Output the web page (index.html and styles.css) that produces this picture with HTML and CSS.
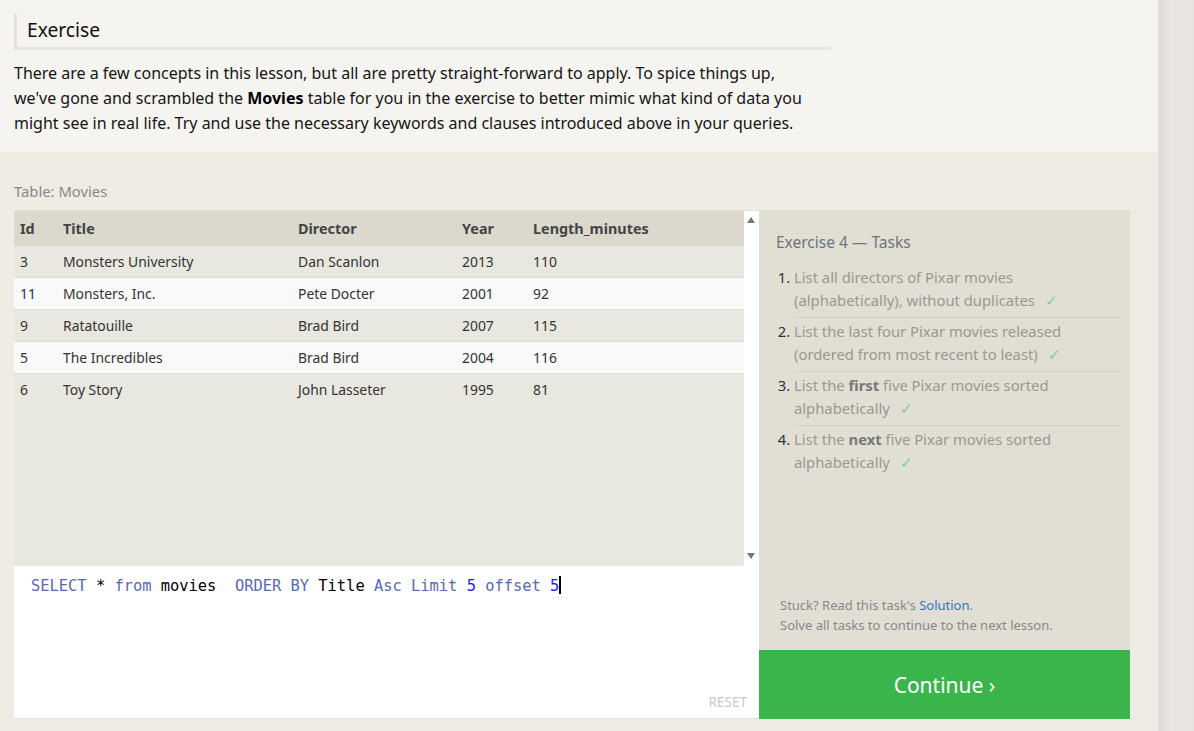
FILE: index.html
```html
<!DOCTYPE html>
<html>
<head>
<meta charset="utf-8">
<link rel="stylesheet" href="styles.css">
</head>
<body>
<div class="page">
  <div class="main">
    <section class="intro">
      <h2 class="heading">Exercise</h2>
      <p class="lead">There are a few concepts in this lesson, but all are pretty straight-forward to apply. To spice things up, we've gone and scrambled the <strong>Movies</strong> table for you in the exercise to better mimic what kind of data you might see in real life. Try and use the necessary keywords and clauses introduced above in your queries.</p>
    </section>
    <section class="exercise">
      <div class="table-label">Table: Movies</div>
      <div class="workspace">
        <div class="left">
          <div class="table-area">
            <div class="table-scroll">
              <table class="movies">
                <thead>
                  <tr><th class="c-id">Id</th><th class="c-title">Title</th><th class="c-dir">Director</th><th class="c-year">Year</th><th>Length_minutes</th></tr>
                </thead>
                <tbody>
                  <tr><td>3</td><td>Monsters University</td><td>Dan Scanlon</td><td>2013</td><td>110</td></tr>
                  <tr><td>11</td><td>Monsters, Inc.</td><td>Pete Docter</td><td>2001</td><td>92</td></tr>
                  <tr><td>9</td><td>Ratatouille</td><td>Brad Bird</td><td>2007</td><td>115</td></tr>
                  <tr><td>5</td><td>The Incredibles</td><td>Brad Bird</td><td>2004</td><td>116</td></tr>
                  <tr><td>6</td><td>Toy Story</td><td>John Lasseter</td><td>1995</td><td>81</td></tr>
                </tbody>
              </table>
            </div>
            <div class="scrollbar">
              <span class="arrow up"></span>
              <span class="arrow down"></span>
            </div>
          </div>
          <div class="editor">
            <div class="code"><span class="kw">SELECT</span> * <span class="kw">from</span> movies  <span class="kw">ORDER BY</span> Title <span class="kw">Asc</span> <span class="kw">Limit</span> <span class="num">5</span> <span class="kw">offset</span> <span class="num">5</span><span class="cursor"></span></div>
            <div class="reset">RESET</div>
          </div>
        </div>
        <div class="right">
          <div class="tasks">
            <h3 class="tasks-title">Exercise 4 — Tasks</h3>
            <ol class="task-list">
              <li><span class="task-text">List all directors of Pixar movies (alphabetically), without duplicates <span class="check">✓</span></span></li>
              <li><span class="task-text">List the last four Pixar movies released (ordered from most recent to least) <span class="check">✓</span></span></li>
              <li><span class="task-text">List the <b>first</b> five Pixar movies sorted alphabetically <span class="check">✓</span></span></li>
              <li><span class="task-text">List the <b>next</b> five Pixar movies sorted alphabetically <span class="check">✓</span></span></li>
            </ol>
            <div class="stuck">Stuck? Read this task's <a class="solution">Solution</a>.<br>Solve all tasks to continue to the next lesson.</div>
          </div>
          <div class="continue">Continue ›</div>
        </div>
      </div>
    </section>
  </div>
  <div class="strip"></div>
</div>
</body>
</html>
```
FILE: styles.css
```css
html, body {
  margin: 0;
  padding: 0;
}
body {
  font-family: "Noto Sans", "Open Sans", sans-serif;
  color: #222;
  background: #efece4;
}
.page {
  display: flex;
  width: 1194px;
  height: 731px;
  overflow: hidden;
}
.main {
  width: 1158px;
  display: flex;
  flex-direction: column;
}
.strip {
  flex: 1;
  background: linear-gradient(to right, #e0dcd9, #e9e6e3 40%, #e7e3e0);
}
.intro {
  background: #f5f4f0;
  padding: 14px 14px 0 14px;
  box-sizing: border-box;
  height: 152px;
}
.heading {
  margin: 0;
  width: 794px;
  font-weight: normal;
  font-size: 19.2px;
  line-height: 24px;
  color: #111;
  padding: 4px 10px 5px 10px;
  border-left: 3px solid #e3e2d7;
  border-bottom: 3px solid #e7e6dd;
}
.lead {
  margin: 11px 0 0 0;
  width: 806px;
  font-size: 16px;
  line-height: 25px;
  color: #151515;
}
.lead strong {
  font-weight: bold;
  color: #000;
}
.exercise {
  flex: 1;
  background: #efece4;
  padding: 29px 14px 0 14px;
}
.table-label {
  font-size: 14.8px;
  color: #888;
  line-height: 20px;
  margin-bottom: 9px;
}
.workspace {
  display: flex;
  width: 1116px;
}
.left {
  width: 745px;
  display: flex;
  flex-direction: column;
}
.table-area {
  display: flex;
  height: 356px;
  box-sizing: border-box;
  border-top: 1px solid #e2e0d8;
}
.table-scroll {
  flex: 1;
  background: #e9e8e0;
  overflow: hidden;
}
.movies {
  width: 100%;
  table-layout: fixed;
  border-collapse: collapse;
  font-size: 13.9px;
  color: #333;
}
.movies th {
  background: #dbd9ce;
  text-align: left;
  font-weight: bold;
  font-size: 14.4px;
  color: #444;
  height: 35px;
  padding: 0 0 0 6px;
}
.movies td {
  height: 31px;
  padding: 0 0 0 6px;
  border-bottom: 1px solid #dddcd5;
}
.movies tbody tr:nth-child(odd) td {
  background: #e9e8e0;
}
.movies tbody tr:nth-child(even) td {
  background: #f9f9f9;
}
.movies tbody tr:last-child td {
  border-bottom: none;
}
.c-id { width: 37px; }
.c-title { width: 229px; }
.c-dir { width: 158px; }
.c-year { width: 65px; }
.scrollbar {
  width: 15px;
  background: #fff;
  position: relative;
}
.arrow {
  position: absolute;
  left: 3px;
  width: 0;
  height: 0;
  border-left: 4.5px solid transparent;
  border-right: 4.5px solid transparent;
}
.arrow.up {
  top: 6px;
  border-bottom: 6px solid #777;
}
.arrow.down {
  bottom: 7px;
  border-top: 6px solid #777;
}
.editor {
  background: #fff;
  height: 152px;
  position: relative;
  border-bottom: 1px solid #e5e3dc;
}
.code {
  font-family: "DejaVu Sans Mono", "Liberation Mono", monospace;
  font-size: 15.4px;
  line-height: 20px;
  padding: 10px 0 0 17px;
  color: #000;
  white-space: pre;
}
.kw { color: #5669b8; }
.num { color: #1a1aff; }
.cursor {
  display: inline-block;
  width: 2px;
  height: 18px;
  background: #000;
  vertical-align: -3px;
}
.reset {
  position: absolute;
  right: 12px;
  bottom: 7px;
  font-size: 13.6px;
  color: #c9c9c9;
}
.right {
  width: 371px;
  display: flex;
  flex-direction: column;
}
.tasks {
  flex: 1;
  background: #e1dfd4;
  padding: 21px 8px 0 17px;
  display: flex;
  flex-direction: column;
}
.tasks-title {
  margin: 0;
  font-weight: normal;
  font-size: 15.5px;
  line-height: 22px;
  color: #6f7380;
}
.task-list {
  margin: 11px 0 0 0;
  padding: 0 0 0 18px;
  font-size: 14.8px;
  line-height: 22.5px;
  color: #9a9890;
}
.task-list li {
  padding: 2px 30px 6px 0;
  border-bottom: 1px solid #d3d1c6;
}
.task-list li:last-child {
  border-bottom: none;
}
.task-list li::marker {
  color: #333;
}
.task-list b {
  color: #777;
}
.check {
  color: #7fcf8a;
  margin-left: 6px;
}
.stuck {
  margin-top: auto;
  margin-bottom: 15px;
  font-size: 13px;
  line-height: 20px;
  color: #888;
  padding-left: 4px;
}
.solution {
  color: #3370d6;
}
.continue {
  height: 69px;
  background: #3ab54b;
  color: #fff;
  font-size: 21px;
  display: flex;
  align-items: center;
  justify-content: center;
}
```
